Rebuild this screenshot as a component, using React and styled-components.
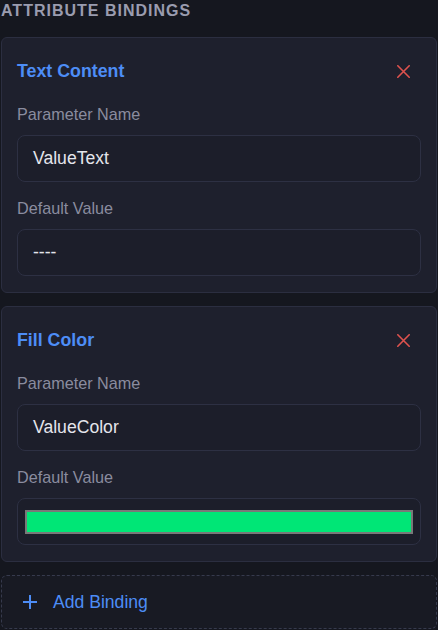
import React from "react";
import styled, { createGlobalStyle } from "styled-components";

const Global = createGlobalStyle`
  html, body { margin: 0; padding: 0; background: #15171f; }
  body { font-family: "Liberation Sans", Arial, sans-serif; }
  * { box-sizing: border-box; }
`;

const Panel = styled.div`
  width: 438px;
  padding: 1px 1px 0 1px;
  display: flex;
  flex-direction: column;
`;

const Heading = styled.div`
  font-size: 16px;
  line-height: 20px;
  font-weight: 700;
  letter-spacing: 1px;
  text-transform: uppercase;
  color: #9a9caf;
  margin-bottom: 16px;
`;

const List = styled.div`
  display: flex;
  flex-direction: column;
  gap: 13px;
`;

const Card = styled.div`
  background: #1e202d;
  border: 1px solid #2b2e40;
  border-radius: 6px;
  padding: 16px 15px;
  display: flex;
  flex-direction: column;
`;

const CardHead = styled.div`
  height: 34px;
  display: flex;
  align-items: center;
  justify-content: space-between;
`;

const Title = styled.div`
  font-size: 17.8px;
  font-weight: 700;
  color: #4d8df6;
`;

const RemoveButton = styled.button`
  background: none;
  border: none;
  padding: 4px;
  margin-right: 7px;
  display: flex;
  cursor: pointer;
`;

const Fields = styled.div`
  margin-top: 16px;
  display: flex;
  flex-direction: column;
  gap: 16px;
`;

const Field = styled.div`
  display: flex;
  flex-direction: column;
`;

const Label = styled.div`
  font-size: 16.2px;
  line-height: 21px;
  color: #8a8c9f;
  margin-bottom: 10px;
`;

const InputBox = styled.div`
  height: 47px;
  flex: none;
  border: 1px solid #2d3043;
  border-radius: 8px;
  background: #1c1e2a;
  display: flex;
  align-items: center;
  padding: ${(p) => (p.$swatch ? "0 7px" : "0 15px")};
  font-size: 17.6px;
  color: #e4e5ec;
`;

const Swatch = styled.div`
  flex: 1;
  height: 24px;
  margin-top: 1px;
  border: 2px solid #787878;
  background: ${(p) => p.$color};
`;

const AddButton = styled.button`
  margin-top: 13px;
  height: 54px;
  border: 1px dashed #363a4d;
  border-radius: 6px;
  background: #181a23;
  display: flex;
  align-items: center;
  gap: 16px;
  padding: 0 0 0 21px;
  font-family: "Liberation Sans", Arial, sans-serif;
  font-size: 17.6px;
  color: #4d8df6;
  cursor: pointer;
`;

const XIcon = () => (
  <svg width="13" height="13" viewBox="0 0 13 13">
    <path d="M0.8 0.8L12.2 12.2M12.2 0.8L0.8 12.2" stroke="#df524e" strokeWidth="1.6" strokeLinecap="round" />
  </svg>
);

const PlusIcon = () => (
  <svg width="14" height="14" viewBox="0 0 14 14">
    <path d="M7 0.5V13.5M0.5 7H13.5" stroke="#4d8df6" strokeWidth="2" strokeLinecap="round" />
  </svg>
);

const bindings = [
  { title: "Text Content", param: "ValueText", value: "----" },
  { title: "Fill Color", param: "ValueColor", color: "#00e676" },
];

export default function App() {
  return (
    <>
      <Global />
      <Panel>
        <Heading>Attribute Bindings</Heading>
        <List>
          {bindings.map((b) => (
            <Card key={b.title}>
              <CardHead>
                <Title>{b.title}</Title>
                <RemoveButton aria-label="Remove">
                  <XIcon />
                </RemoveButton>
              </CardHead>
              <Fields>
                <Field>
                  <Label>Parameter Name</Label>
                  <InputBox>{b.param}</InputBox>
                </Field>
                <Field>
                  <Label>Default Value</Label>
                  {b.color ? (
                    <InputBox $swatch>
                      <Swatch $color={b.color} />
                    </InputBox>
                  ) : (
                    <InputBox>{b.value}</InputBox>
                  )}
                </Field>
              </Fields>
            </Card>
          ))}
        </List>
        <AddButton>
          <PlusIcon />
          Add Binding
        </AddButton>
      </Panel>
    </>
  );
}
